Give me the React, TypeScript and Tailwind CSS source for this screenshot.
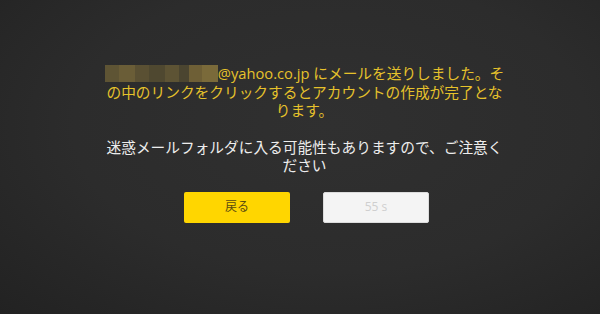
import React from 'react';

const blurCells = [
  { w: 'w-[14px]', c: 'bg-[#5e5434]' },
  { w: 'w-[16px]', c: 'bg-[#6a5d37]' },
  { w: 'w-[14px]', c: 'bg-[#5a5033]' },
  { w: 'w-[16px]', c: 'bg-[#4f4830]' },
  { w: 'w-[14px]', c: 'bg-[#5d5334]' },
  { w: 'w-[10px]', c: 'bg-[#4b4530]' },
  { w: 'w-[13px]', c: 'bg-[#6e5f36]' },
  { w: 'w-[16px]', c: 'bg-[#7a6a3a]' },
];

export default function App() {
  return (
    <div className="w-[600px] h-[314px] overflow-hidden bg-[radial-gradient(ellipse_at_55%_40%,#303030_0%,#2c2c2c_55%,#222222_100%)] font-['Open_Sans','Noto_Sans_CJK_JP',sans-serif]">
      <div className="flex flex-col items-center pt-[64px] pl-[9px]">
        <p className="w-[410px] text-center text-[14.7px] leading-[18.5px] text-[#e6c22b]">
          <span className="inline-flex align-[-3px] h-[17px]">
            {blurCells.map((b, i) => (
              <span key={i} className={`${b.w} h-full ${b.c}`} />
            ))}
          </span>
          @yahoo.co.jp にメールを送りしました。そ
          <br />
          の中のリンクをクリックするとアカウントの作成が完了とな
          <br />
          ります。
        </p>
        <p className="mt-[18px] w-[410px] text-center text-[14.7px] leading-[18.5px] text-[#ededed]">
          迷惑メールフォルダに入る可能性もありますので、ご注意く
          <br />
          ださい
        </p>
        <div className="mt-[17px] pl-[4px] flex gap-[33px]">
          <button className="w-[106px] h-[31px] rounded-[2px] bg-[#ffd600] text-[12px] text-[#5b4c10]">
            戻る
          </button>
          <button className="w-[106px] h-[31px] rounded-[2px] bg-[#f4f4f4] border border-[#dcdcdc] text-[12px] text-[#cfcfcf]">
            55 s
          </button>
        </div>
      </div>
    </div>
  );
}
